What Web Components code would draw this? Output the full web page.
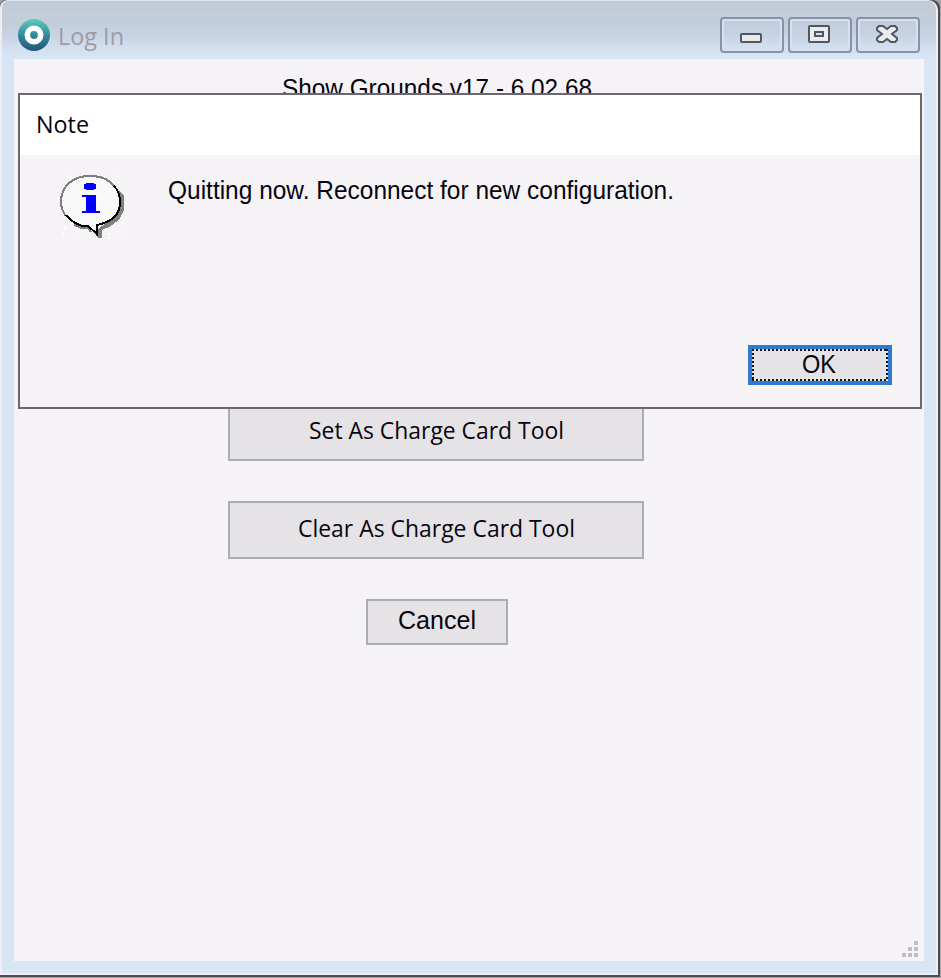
<!DOCTYPE html>
<html lang="en"><head><meta charset="utf-8"><title>Log In</title>
<style>html,body{margin:0;width:941px;height:978px;overflow:hidden;background:#a6a6a8}</style></head>
<body><login-window></login-window>
<script>
const define=(name,html,init)=>customElements.define(name,class extends HTMLElement{
  constructor(){super();this.attachShadow({mode:'open'}).innerHTML=html;}
  connectedCallback(){if(init)init(this,this.shadowRoot);}
});

// A single line of text condensed or stretched to an exact width.
define('fit-label',`<style>:host{display:block;white-space:nowrap;font:24.5px/30px "Open Sans","Noto Sans",sans-serif;color:#08050f}
:host([face=arial]){font-family:"Liberation Sans",Arial,sans-serif;font-size:25px}
span{display:inline-block;transform-origin:0 50%}</style><span><slot></slot></span>`,(el,root)=>{
  const w=+el.getAttribute('width'),s=root.querySelector('span');
  el.style.width=w+'px';
  s.style.transform='scaleX('+w/s.getBoundingClientRect().width+')';
});

define('push-button',`<style>:host{display:flex;box-sizing:border-box;justify-content:center;align-items:center;background:#e5e3e6;border:2px solid #adacae}
:host([focused]){border:4px solid #3079d1;position:relative}
svg{display:none;position:absolute;left:0;top:0}:host([focused]) svg{display:block}</style>
<svg width="136" height="32" fill="none" stroke="#111" stroke-width="2" stroke-dasharray="2"><path d="M0 1H136M0 31H136M1 0V32M135 0V32"/></svg><slot></slot>`);

define('caption-button',`<style>:host{display:flex;box-sizing:border-box;width:64px;height:36px;border:2px solid #8791ae;border-radius:4px;box-shadow:inset 0 0 0 2px #d8e0ec;align-items:center;justify-content:center}</style><slot></slot>`);

define('app-icon',`<style>:host{display:block;width:32px;height:32px}svg{display:block}</style>
<svg width="32" height="32" viewBox="0 0 32 32"><defs><linearGradient id="g" x2="0" y2="1"><stop stop-color="#60cbbb"/><stop offset=".5" stop-color="#338c99"/><stop offset="1" stop-color="#23547a"/></linearGradient></defs><circle cx="16" cy="16" r="16" fill="url(#g)"/><circle cx="16" cy="16" r="6.7" fill="none" stroke="#fff" stroke-width="5.6"/></svg>`);

define('note-icon',`<style>:host{display:block;width:68px;height:68px}svg{display:block}</style>
<svg width="68" height="68" viewBox="-1 -1 68 68" shape-rendering="crispEdges">
<path d="M60 16L65 22V36L60 46L50 53L43 56V64H39L35 58L43 52L57 42Z" fill="#807e80"/>
<path d="M22 53C9 49 2 40 2 28C2 12 14 2 31 2C49 2 61 12 61 28C61 40 52 49 39 52V61L31 54Z" fill="#f8f8f9"/>
<path d="M7 42C3 37 2 33 2 28C2 12 14 2 31 2C43 2 51 6 56 13" fill="none" stroke="#807e80" stroke-width="2"/>
<path d="M15 51L23 54H29L32 58" fill="none" stroke="#807e80" stroke-width="2"/>
<path d="M55 12C60 17 61 22 61 28C61 40 53 48 38 51V60L29 52H23C17 50 11 46 7 41" fill="none" stroke="#000" stroke-width="2"/>
<path d="M27 9H35V10H37V15H35V16H27V15H25V10H27ZM23 21H37V37H41V39H23V37H27V23H23Z" fill="#0000ff"/>
<path d="M7 1h2v2h-2zM57 1h2v2h-2zM5 53h2v2h-2zM63 48h2v2h-2zM49 59h2v2h-2zM57 57h2v2h-2zM64 57h2v2h-2zM3 59h2v2h-2zM20 62h2v2h-2zM30 62h2v2h-2zM49 63h2v2h-2z" fill="#fff"/></svg>`);

define('resize-grip',`<style>:host{display:block;width:16px;height:16px}svg{display:block}</style><svg width="16" height="16" fill="#bfbdbf"><path d="M12 0h4v4h-4zM6 6h4v4h-4zM12 6h4v4h-4zM0 12h4v4h-4zM6 12h4v4h-4zM12 12h4v4h-4z"/></svg>`);

define('title-bar',`<style>:host{display:flex;box-sizing:border-box;height:58px;padding:16px 16px 0 16px;align-items:flex-start;background:linear-gradient(#bdc9d7 0,#c2ced9 14px,#c2cddc 22px,#c7d3e3 34px,#d0dded 44px,#d8e5f5 56px)}
app-icon{margin-top:2px}fit-label{margin:4px 0 0 8px;color:#9d9ba5}div{display:flex;gap:4px;margin-left:auto}svg{display:block;margin:-2px 2px 0 0}.min{margin-top:6px}</style>
<app-icon></app-icon><fit-label width="66">Log In</fit-label>
<div><caption-button><svg class="min" width="22" height="10"><rect x="1" y="1" width="20" height="8" rx="1" fill="#e9eaea" stroke="#515568" stroke-width="2"/></svg></caption-button>
<caption-button><svg width="22" height="18"><rect x="1" y="1" width="20" height="16" rx="1" fill="#ebecec" stroke="#515568" stroke-width="2"/><rect x="7" y="7" width="8" height="4" fill="#dde0e4" stroke="#515568" stroke-width="2"/></svg></caption-button>
<caption-button><svg width="22" height="18"><path d="M3 1H7L11 4L15 1H19L21 3V5L16 9L21 13V15L19 17H15L11 14L7 17H3L1 15V13L6 9L1 5V3Z" fill="#eaebec" stroke="#515568" stroke-width="2"/></svg></caption-button></div>`);

define('note-dialog',`<style>:host{display:flex;box-sizing:border-box;flex-direction:column;width:904px;height:316px;border:2px solid #6a686c;background:#f5f3f6}
header{background:#fff;height:60px;box-sizing:border-box;padding:14px 0 0 16px}main{display:flex;align-items:flex-start;padding:18px 0 0 38px;flex:1}main fit-label{margin:2px 0 0 42px}
footer{display:flex;justify-content:flex-end;padding:0 28px 22px}push-button{width:144px;height:40px}footer fit-label{margin:-2px 2px 0 0}</style>
<header><fit-label width="53">Note</fit-label></header>
<main><note-icon></note-icon><fit-label face="arial" width="506">Quitting now. Reconnect for new configuration.</fit-label></main>
<footer><push-button focused><fit-label face="arial" width="34">OK</fit-label></push-button></footer>`);

define('login-window',`<style>:host{display:block;position:relative;box-sizing:border-box;width:940px;height:977px;border:solid #4d4b4e;border-width:0 2px 2px 0;background:#4d4b4e;border-radius:6px 8px 0 0}
.frame{box-sizing:border-box;width:938px;height:975px;border:2px solid #efeef3;border-top:1px solid #e3e8ed;background:#d8e5f3;border-radius:8px 10px 0 0;overflow:hidden}
.content{margin:0 12px 12px;height:902px;background:#f5f3f6;display:flex;flex-direction:column;box-sizing:border-box;padding-top:14px}
.content>fit-label{margin-left:268px}.actions{display:flex;flex-direction:column;align-items:center;gap:40px;width:416px;margin:300px 0 0 214px}
.actions push-button{width:416px;height:58px}.actions push-button:last-child{width:142px;height:46px;margin-left:2px}.actions push-button fit-label{margin-top:-4px}
.grip{margin:auto 6px 4px auto}note-dialog{position:absolute;left:18px;top:93px}</style>
<div class="frame"><title-bar></title-bar><section class="content"><fit-label face="arial" width="310">Show Grounds v17 - 6.02.68</fit-label>
<div class="actions"><push-button><fit-label width="255">Set As Charge Card Tool</fit-label></push-button><push-button><fit-label width="277">Clear As Charge Card Tool</fit-label></push-button><push-button><fit-label face="arial" width="78">Cancel</fit-label></push-button></div>
<resize-grip class="grip"></resize-grip></section></div><note-dialog></note-dialog>`);
</script></body></html>
